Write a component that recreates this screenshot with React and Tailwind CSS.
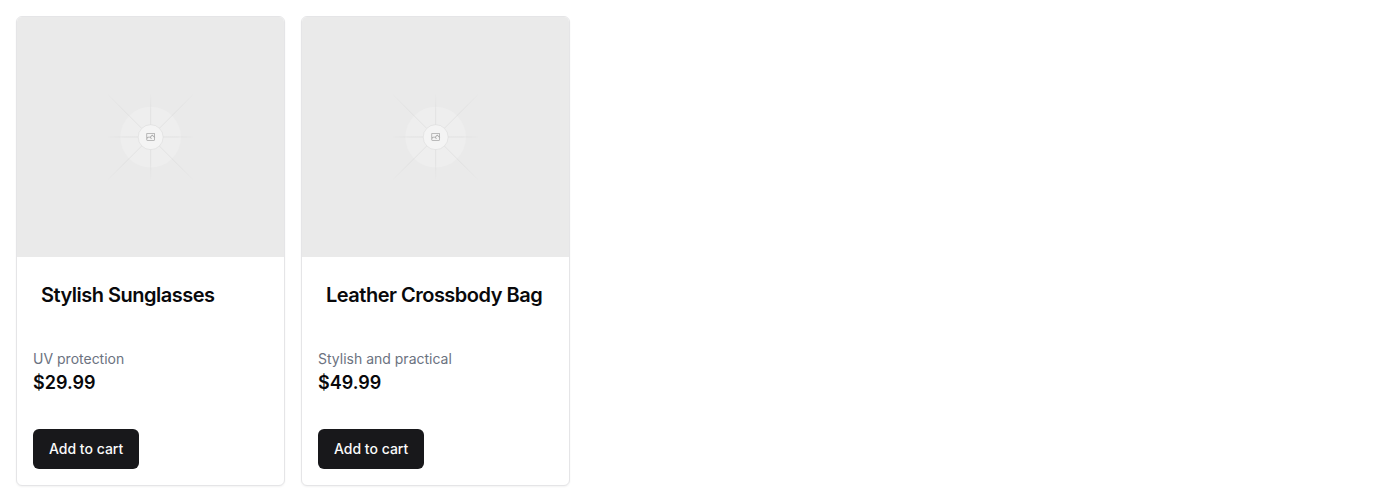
const products = [
  { id: 'sunglasses', name: 'Stylish Sunglasses', description: 'UV protection', price: '$29.99' },
  { id: 'bag', name: 'Leather Crossbody Bag', description: 'Stylish and practical', price: '$49.99' },
];

function FadeStops() {
  return (
    <>
      <stop stopColor="#C9C9C9" stopOpacity="0" />
      <stop offset=".208" stopColor="#C9C9C9" />
      <stop offset=".792" stopColor="#C9C9C9" />
      <stop offset="1" stopColor="#C9C9C9" stopOpacity="0" />
    </>
  );
}

function Placeholder({ id }) {
  const url = (name) => `url(#${id}-${name})`;
  return (
    <svg
      className="block h-60 w-full bg-[#eaeaea]"
      viewBox="0 0 1200 1200"
      preserveAspectRatio="xMidYMid slice"
      fill="none"
      aria-hidden="true"
    >
      <defs>
        <linearGradient id={`${id}-h`} gradientUnits="userSpaceOnUse" x1="404.5" y1="600" x2="796.9" y2="600">
          <FadeStops />
        </linearGradient>
        <linearGradient id={`${id}-v`} gradientUnits="userSpaceOnUse" x1="600" y1="403.7" x2="600" y2="796.1">
          <FadeStops />
        </linearGradient>
        <linearGradient id={`${id}-d`} gradientUnits="userSpaceOnUse" x1="404.5" y1="404" x2="796.9" y2="796">
          <FadeStops />
        </linearGradient>
        <linearGradient id={`${id}-u`} gradientUnits="userSpaceOnUse" x1="404.5" y1="796" x2="796.9" y2="404">
          <FadeStops />
        </linearGradient>
      </defs>
      <g opacity=".5">
        <circle cx="600.7" cy="600.7" r="136.6" fill="#F2F2F2" />
        <path stroke={url('u')} strokeWidth="2.418" d="M404.5 796 796.9 404" />
        <path stroke={url('h')} strokeWidth="2.418" d="M404.8 599.9h391.8" />
        <path stroke={url('v')} strokeWidth="2.418" d="M600.7 795.7V404" />
        <path stroke={url('d')} strokeWidth="2.418" d="m795.7 796.6-391.4-391.4" />
        <circle cx="600.7" cy="600.7" r="56" fill="#fff" stroke="#C9C9C9" strokeWidth="2.418" />
        <path
          fill="#666"
          fillRule="evenodd"
          clipRule="evenodd"
          d="M616.426 586.58h-31.434v16.176l3.553-3.554.531-.531h9.068l.074-.074 8.463-8.463h2.565l7.18 7.181V586.58Zm-15.715 14.654 3.698 3.699 1.283 1.282-2.565 2.565-1.282-1.283-5.2-5.199h-6.066l-5.514 5.514-.073.073v2.876a2.418 2.418 0 0 0 2.418 2.418h26.598a2.418 2.418 0 0 0 2.418-2.418v-8.317l-8.463-8.463-7.181 7.181-.071.072Zm-19.347 5.442v4.085a6.045 6.045 0 0 0 6.046 6.045h26.598a6.044 6.044 0 0 0 6.045-6.045v-7.108l1.356-1.355-1.282-1.283-.074-.073v-17.989h-38.689v23.43l-.146.146.146.147Z"
        />
      </g>
    </svg>
  );
}

function ProductCard({ product }) {
  return (
    <article className="overflow-hidden rounded-md border border-[#e5e5e7] bg-white shadow-xs">
      <Placeholder id={product.id} />
      <header className="p-6">
        <h2 className="text-xl font-semibold tracking-tight">{product.name}</h2>
      </header>
      <div className="p-4">
        <p className="text-sm text-[#6b7280]">{product.description}</p>
        <p className="text-lg font-semibold">{product.price}</p>
      </div>
      <footer className="p-4">
        <button
          type="button"
          className="h-10 rounded-md bg-[#18181b] px-4 text-sm font-medium text-[#fafafa] hover:bg-zinc-800"
        >
          Add to cart
        </button>
      </footer>
    </article>
  );
}

export default function App() {
  return (
    <main className="grid grid-cols-[repeat(auto-fill,minmax(0,269px))] gap-4 p-4 font-['Inter',sans-serif] text-[#09090b] antialiased">
      {products.map((product) => (
        <ProductCard key={product.id} product={product} />
      ))}
    </main>
  );
}
